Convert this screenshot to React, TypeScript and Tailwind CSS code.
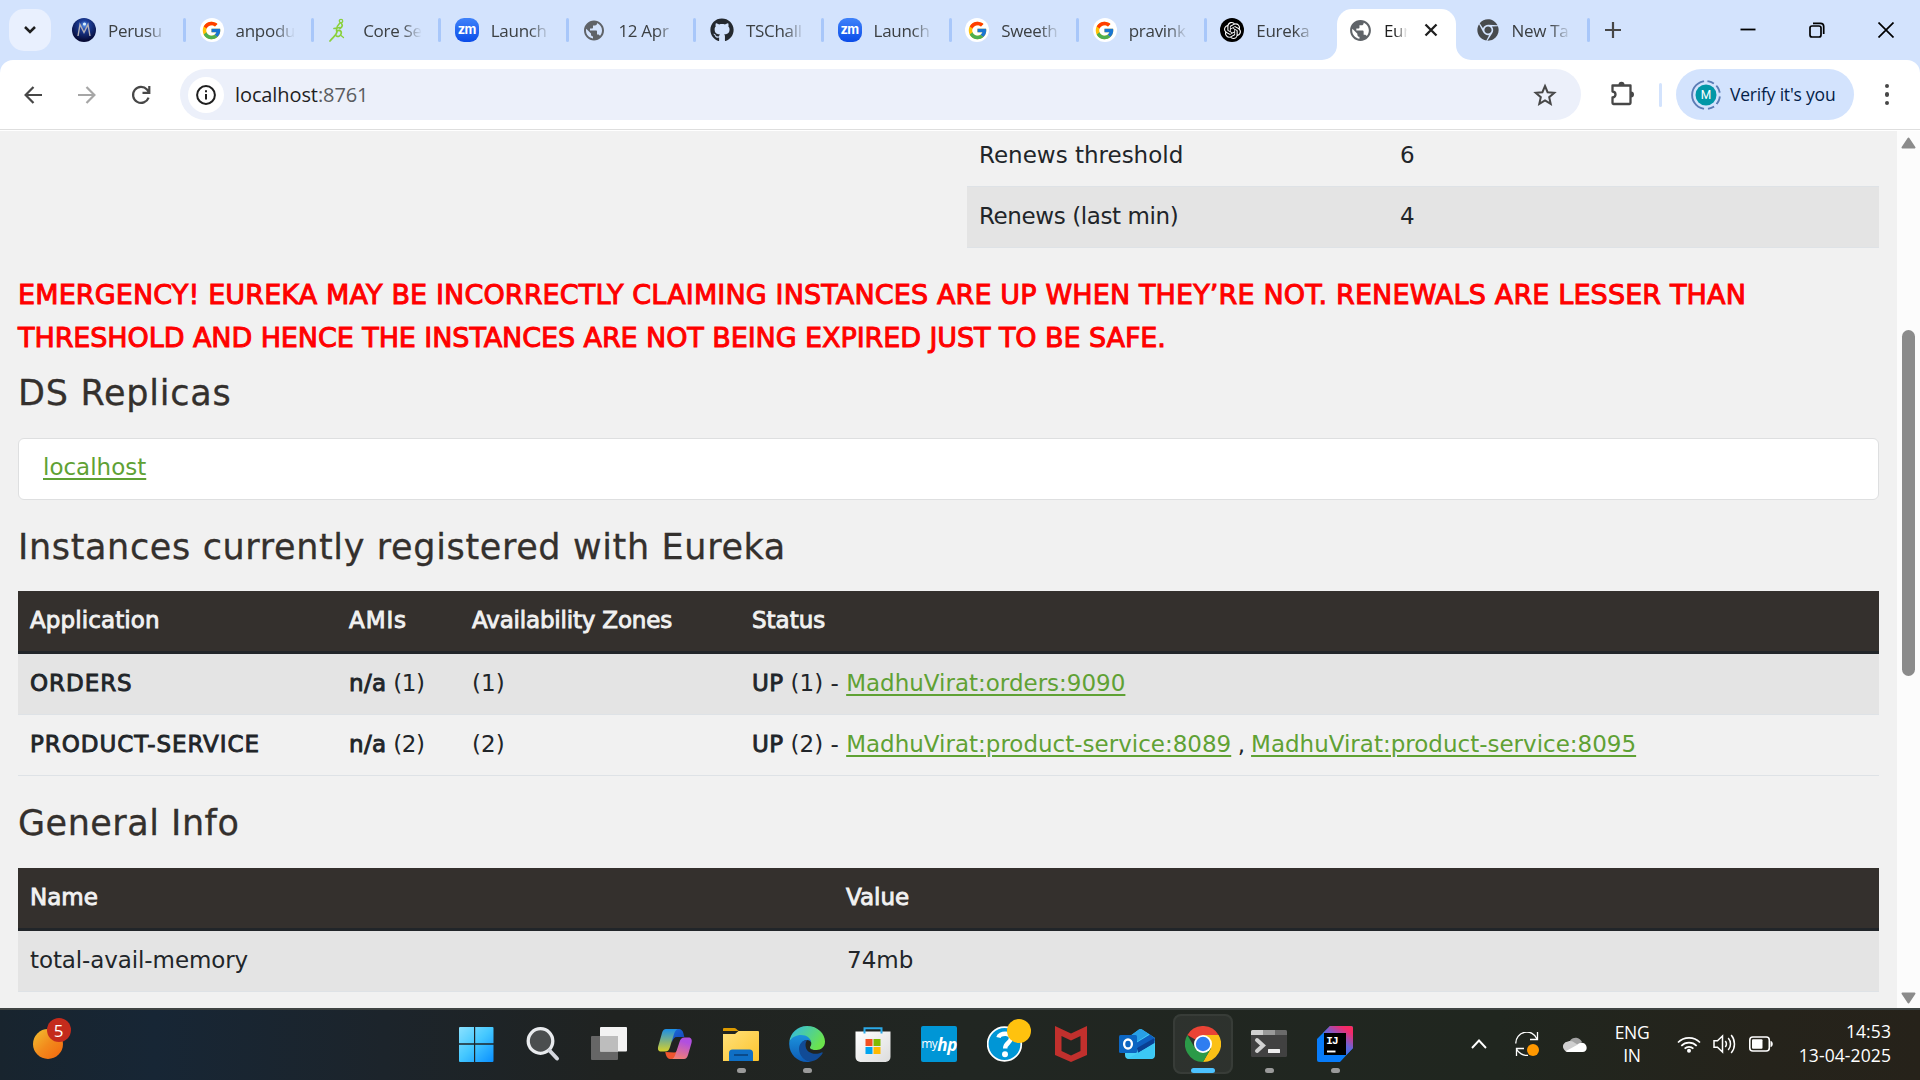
import React from "react";
import { MdPublic } from "react-icons/md";
import { FcGoogle } from "react-icons/fc";
import { FaGithub, FaChrome } from "react-icons/fa";
import { SiOpenai } from "react-icons/si";

/* ---------- favicons ---------- */

const MIcon = () => (
  <svg viewBox="0 0 24 24" className="size-6">
    <defs>
      <radialGradient id="mOrb" cx=".52" cy=".3" r=".65">
        <stop offset="0" stopColor="#5f9cf5" />
        <stop offset=".3" stopColor="#1c3f9c" />
        <stop offset="1" stopColor="#060a35" />
      </radialGradient>
    </defs>
    <circle cx="12" cy="12" r="12" fill="url(#mOrb)" />
    <path d="M6 18 8 6.5l4 8 4-8L18 18" fill="none" stroke="#b5b1b4" strokeWidth="1.4" />
    <circle cx="12.5" cy="6" r="1.6" fill="#d9f0ff" />
  </svg>
);

const GIcon = () => (
  <span className="flex size-6 items-center justify-center rounded-full bg-white">
    <FcGoogle className="size-[21px]" />
  </span>
);

const FigureIcon = () => (
  <svg viewBox="0 0 24 24" className="size-6" fill="none" stroke="#8ad03c" strokeLinecap="round">
    <circle cx="14" cy="3" r="1.7" strokeWidth="1.3" />
    <path d="M12.5 5.5c-3 3-3.500 6-2.500 8.500M14 5c2 2 1.500 4-1 5.500M7 10.500l6-1M10 13c3-1.500 5 .5 4 3s-3 3-4.500 2M10 14c-1 4-4 5-7 9" strokeWidth="1.7" />
    <path d="M14 17.500l2.500 2" strokeWidth="1.300" />
  </svg>
);

const ZmIcon = () => (
  <span className="flex size-6 items-center justify-center rounded-[9px] bg-gradient-to-b from-[#3f82fa] to-[#0a4be8] font-['Inter'] text-[13px] leading-none font-bold tracking-[-0.5px] text-white">
    <span className="-mt-[2px]">zm</span>
  </span>
);

const GlobeIcon = () => <MdPublic className="size-[25px] text-[#5f6368]" />;
const GithubIcon = () => <FaGithub className="size-6 text-[#24292f]" />;
const GptIcon = () => (
  <span className="flex size-6 items-center justify-center rounded-full bg-black">
    <SiOpenai className="size-[17px] text-white" />
  </span>
);
const ChromeGray = () => (
  <span className="flex size-6 items-center justify-center">
    <FaChrome className="size-[22px] text-[#474a4d]" />
  </span>
);

const tabs: { icon: React.FC; label: string; divider: boolean }[] = [
  { icon: MIcon, label: "Perusu", divider: true },
  { icon: GIcon, label: "anpodu", divider: true },
  { icon: FigureIcon, label: "Core Se", divider: true },
  { icon: ZmIcon, label: "Launch", divider: true },
  { icon: GlobeIcon, label: "12 Apr", divider: true },
  { icon: GithubIcon, label: "TSChall", divider: true },
  { icon: ZmIcon, label: "Launch", divider: true },
  { icon: GIcon, label: "Sweeth", divider: true },
  { icon: GIcon, label: "pravink", divider: true },
  { icon: GptIcon, label: "Eureka", divider: false },
];

const Tab = ({ icon: Icon, label, divider }: { icon: React.FC; label: string; divider: boolean }) => (
  <div className="flex h-full w-[127.6px] shrink-0 items-center">
    <div className="ml-[15px] flex w-6 shrink-0 justify-center"><Icon /></div>
    <span className="mt-[2px] ml-3 w-[62px] shrink-0 whitespace-nowrap text-[17px] tracking-[-0.3px] text-[#3c4043] [mask-image:linear-gradient(to_right,black_62%,transparent_95%)]">
      {label}
    </span>
    {divider && <span className="ml-auto -mr-[1.500px] h-6 w-[3px] rounded-full bg-[#a8c7fa]" />}
  </div>
);

const ActiveTab = () => (
  <div className="h-full w-[127.6px] shrink-0 px-[4.5px] pt-[9px]">
    <div className="relative flex h-[51px] items-center rounded-t-[15px] bg-white">
      <svg viewBox="0 0 15 15" className="absolute bottom-0 -left-[15px] size-[15px]"><path d="M15 0v15H0A15 15 0 0 0 15 0z" fill="#fff" /></svg>
      <svg viewBox="0 0 15 15" className="absolute -right-[15px] bottom-0 size-[15px]"><path d="M0 0v15h15A15 15 0 0 1 0 0z" fill="#fff" /></svg>
      <div className="-mt-[9px] ml-[10.5px] w-6"><GlobeIcon /></div>
      <span className="-mt-[7px] ml-[12px] w-[24px] whitespace-nowrap text-[17px] tracking-[-0.3px] text-[#1f1f1f] [mask-image:linear-gradient(to_right,black_45%,transparent_98%)]">
        Eur
      </span>
      <svg viewBox="0 0 14 14" className="-mt-[9px] ml-[16px] size-[14px]"><path d="M1.500 1.500l11 11M12.500 1.500l-11 11" stroke="#1f1f1f" strokeWidth="2.300" /></svg>
    </div>
  </div>
);

const TabStrip = () => (
  <div className="flex h-[60px] items-center bg-[#d3e3fd]">
    <div className="ml-[9px] flex size-[42px] shrink-0 items-center justify-center rounded-[15px] bg-[#e9f0fe]">
      <svg viewBox="0 0 14 10" className="h-[10px] w-[14px]"><path d="M2 2l5 5 5-5" fill="none" stroke="#1f1f1f" strokeWidth="2.500" /></svg>
    </div>
    <div className="ml-[6px] flex h-full items-center">
      {tabs.map((t, i) => <Tab key={i} {...t} />)}
      <ActiveTab />
      <Tab icon={ChromeGray} label="New Ta" divider />
    </div>
    <svg viewBox="0 0 16 16" className="ml-[17px] size-4"><path d="M8 0v16M0 8h16" stroke="#474747" strokeWidth="2.200" /></svg>
    <div className="mr-[26.500px] ml-auto flex items-center gap-[53px] text-black">
      <svg viewBox="0 0 16 16" className="size-4"><path d="M.5 7.500h15" stroke="currentColor" strokeWidth="1.800" /></svg>
      <svg viewBox="0 0 16 16" className="size-4" fill="none" stroke="currentColor" strokeWidth="1.700">
        <rect x="1" y="4" width="11" height="11" rx="2" />
        <path d="M4 1.300h7.500a3.200 3.200 0 0 1 3.200 3.200V12" />
      </svg>
      <svg viewBox="0 0 16 16" className="size-4"><path d="M.5.500l15 15M15.500.500l-15 15" stroke="currentColor" strokeWidth="1.700" /></svg>
    </div>
  </div>
);

const Toolbar = () => (
  <div className="bg-[#d3e3fd]">
    <div className="flex h-[69px] items-center rounded-t-[13px] bg-white">
      <svg viewBox="0 0 18 18" className="ml-6 size-[18px]" fill="none" stroke="#474747" strokeWidth="2.200"><path d="M18 9H1.800M9.500 1 1.600 9l7.900 8" /></svg>
      <svg viewBox="0 0 18 18" className="ml-9 size-[18px]" fill="none" stroke="#a6a6a6" strokeWidth="2.200"><path d="M0 9h16.200M8.500 1l7.900 8-7.900 8" /></svg>
      <svg viewBox="0 0 20 20" className="ml-[35px] size-5" fill="none" stroke="#474747" strokeWidth="2.200"><path d="M17.600 12.600A8 8 0 1 1 16 4.500L18 7M18.300 1v6.800h-6.800" /></svg>
      <div className="ml-[29px] flex h-[51px] w-[1401px] items-center rounded-full bg-[#ecf0fa]">
        <span className="ml-[8px] flex size-9 items-center justify-center rounded-full bg-white">
          <svg viewBox="0 0 20 20" className="size-5" fill="none" stroke="#1f1f1f" strokeWidth="2"><circle cx="10" cy="10" r="8.900" /><path d="M10 9v5.500M10 5.200v2" /></svg>
        </span>
        <span className="ml-[11px] text-[20px] tracking-[-0.100px] text-[#1f1f1f]">localhost<span className="text-[#5a5c60]">:8761</span></span>
        <svg viewBox="0 0 24 24" className="mr-6 ml-auto size-6" fill="none" stroke="#474747" strokeWidth="2"><path d="M12 3l2.600 6.200 6.700.6-5.100 4.400 1.500 6.600L12 17.300l-5.700 3.500 1.500-6.600L2.700 9.800l6.700-.6z" /></svg>
      </div>
      <svg viewBox="0 0 26 26" className="-mt-[3px] ml-[28px] size-[26px]">
        <path d="M3.500 5.500h18V23a1 1 0 0 1-1 1h-16a1 1 0 0 1-1-1v-5.500c4-.5 4-5.500 0-6z" fill="none" stroke="#474747" strokeWidth="2.300" strokeLinejoin="round" />
        <path d="M9.500 5a3 3.300 0 0 1 6 0zM22 11.500a3 3 0 0 1 0 6z" fill="#474747" />
      </svg>
      <span className="ml-[24px] h-6 w-[3px] rounded-full bg-[#d3e3fd]" />
      <div className="ml-[14px] flex h-[51px] w-[178px] items-center rounded-full bg-[#d3e3fd]">
        <svg viewBox="0 0 30 30" className="ml-[15px] size-[30px]">
          <circle cx="15" cy="15" r="13.900" fill="none" stroke="#5b7cb5" strokeWidth="1.900" />
          <path d="M15 15 13.500 0h2.500zM15 15 24.500 2l2 2zM15 15l15-2v3zM15 15l11 10-2 2zM15 15l1.500 15h-3z" fill="#d3e3fd" stroke="#d3e3fd" />
          <circle cx="15" cy="15" r="10.500" fill="#0097a7" />
          <text x="15" y="19.300" textAnchor="middle" fontSize="12" fontFamily="Roboto" fill="#fff">M</text>
        </svg>
        <span className="ml-[9px] text-[17.500px] tracking-[-0.200px] text-[#041e49]">Verify it's you</span>
      </div>
      <div className="ml-[30.500px] flex flex-col gap-1">
        <i className="size-[4.500px] rounded-full bg-[#474747]" /><i className="size-[4.500px] rounded-full bg-[#474747]" /><i className="size-[4.500px] rounded-full bg-[#474747]" />
      </div>
    </div>
    <div className="h-px bg-[#dedede]" />
    <div className="h-px bg-white" />
  </div>
);

/* ---------- page ---------- */

const cell = "h-[60px] pt-[10.500px] pl-3";
const Head = ({ children }: { children: React.ReactNode }) => (
  <div className="flex h-[63px] border-b-[3px] border-[#212529] bg-[#34302d] text-[#f1f1f1] [-webkit-text-stroke:0.9px]">{children}</div>
);
const H1 = ({ children, className }: { children: React.ReactNode; className: string }) => (
  <h1 className={"h-[44px] text-[35px] leading-[44px] font-normal text-[#34302d] [-webkit-text-stroke:0.3px] " + className}>{children}</h1>
);
const A = ({ children }: { children: React.ReactNode }) => (
  <a className="text-[#5fa134] underline decoration-2 underline-offset-[3px]">{children}</a>
);
const B = ({ children }: { children: React.ReactNode }) => (
  <b className="font-normal tracking-[0.300px] [-webkit-text-stroke:0.9px]">{children}</b>
);

const instances = [
  { name: "ORDERS", n: 1, links: ["MadhuVirat:orders:9090"] },
  { name: "PRODUCT-SERVICE", n: 2, links: ["MadhuVirat:product-service:8089", "MadhuVirat:product-service:8095"] },
];

const Page = () => (
  <div className="flex h-[877px] overflow-hidden bg-[#f1f1f1] font-['DejaVu_Sans',sans-serif] text-[23px] leading-[36px] text-[#212529]">
    <div className="ml-[18px] w-[1861px] shrink-0">
      <div className="-mt-[5px] ml-[949px]">
        <div className="flex h-[61px] border-b border-[#dee2e6]"><div className={cell + " w-[421px]"}>Renews threshold</div><div className={cell}>6</div></div>
        <div className="flex h-[61px] border-b border-[#dee2e6] bg-[#e4e4e4]"><div className={cell + " w-[421px] tracking-[-0.400px]"}>Renews (last min)</div><div className={cell}>4</div></div>
      </div>
      <h4 className="mt-[23px] h-[86px] pt-[1.500px] text-[27px] leading-[43px] font-normal tracking-[0.140px] whitespace-nowrap text-[#ff0000] [-webkit-text-stroke:1px]">
        EMERGENCY! EUREKA MAY BE INCORRECTLY CLAIMING INSTANCES ARE UP WHEN THEY’RE NOT. RENEWALS ARE LESSER THAN<br />
        <span className="tracking-[-0.080px]">THRESHOLD AND HENCE THE INSTANCES ARE NOT BEING EXPIRED JUST TO BE SAFE.</span>
      </h4>
      <H1 className="mt-3 pt-[2px] tracking-[0.750px]">DS Replicas</H1>
      <div className="mt-[25px] h-[62px] rounded-[6px] border border-[#dedfe0] bg-white pt-[10px] pl-6"><A>localhost</A></div>
      <H1 className="mt-[22px] pt-[3px] tracking-[0.640px]">Instances currently registered with Eureka</H1>
      <div className="mt-[25px]">
        <Head>
          <div className={cell + " w-[319px] tracking-[0.100px]"}>Application</div>
          <div className={cell + " w-[123px] tracking-[0.900px]"}>AMIs</div>
          <div className={cell + " w-[280px] tracking-[-0.180px]"}>Availability Zones</div>
          <div className={cell}>Status</div>
        </Head>
        {instances.map((r, i) => (
          <div key={r.name} className={"flex h-[61px] border-b border-[#dee2e6] whitespace-nowrap " + (i % 2 ? "" : "bg-[#e4e4e4]")}>
            <div className={cell + " w-[319px] tracking-[0.950px] [-webkit-text-stroke:0.9px]"}>{r.name}</div>
            <div className={cell + " w-[123px] tracking-[-0.400px]"}><B>n/a</B> ({r.n})</div>
            <div className={cell + " w-[280px]"}>({r.n})</div>
            <div className={cell}>
              <B>UP</B> ({r.n}) - {r.links.map((l, j) => <React.Fragment key={l}>{j > 0 && <span className="tracking-[-0.700px]"> , </span>}<A>{l}</A></React.Fragment>)}
            </div>
          </div>
        ))}
      </div>
      <H1 className="mt-[23px] pt-[2px] tracking-[0.500px]">General Info</H1>
      <div className="mt-[25px]">
        <Head><div className={cell + " w-[816px]"}>Name</div><div className={cell}>Value</div></Head>
        <div className="flex h-[61px] border-b border-[#dee2e6] bg-[#e4e4e4]"><div className={cell + " w-[817px] tracking-[-0.100px]"}>total-avail-memory</div><div className={cell}>74mb</div></div>
      </div>
    </div>
    <div className="ml-auto flex h-[877px] w-[23px] flex-col items-center bg-[#fcfcfc]">
      <svg viewBox="0 0 15 12" className="mt-[6px] h-3 w-[15px]"><path d="M7.500 1.500 13.500 10.500h-12z" fill="#8b8b8b" stroke="#8b8b8b" strokeWidth="2" strokeLinejoin="round" /></svg>
      <div className="mt-[181px] h-[346px] w-[13px] rounded-full bg-[#8b8b8b]" />
      <svg viewBox="0 0 15 12" className="mt-auto mb-[4px] h-3 w-[15px]"><path d="M7.500 10.500 13.500 1.500h-12z" fill="#8b8b8b" stroke="#8b8b8b" strokeWidth="2" strokeLinejoin="round" /></svg>
    </div>
  </div>
);

/* ---------- taskbar ---------- */

const S = ({ children }: { children: React.ReactNode }) => <svg viewBox="0 0 36 36" className="size-9">{children}</svg>;
const Lg = ({ id, a, b, x2 = 0, y2 = 1 }: { id: string; a: string; b: string; x2?: number; y2?: number }) => (
  <linearGradient id={id} x1="0" y1="0" x2={x2} y2={y2}><stop stopColor={a} /><stop offset="1" stopColor={b} /></linearGradient>
);

const apps: { icon: React.ReactNode; state?: string }[] = [
  { icon: <svg viewBox="1 0 36 36" className="size-9"><defs><linearGradient id="w" gradientUnits="userSpaceOnUse" x1="0" y1="0" x2="35" y2="36"><stop stopColor="#8fe3ff" /><stop offset=".5" stopColor="#45c8ff" /><stop offset="1" stopColor="#0a90ff" /></linearGradient></defs><path d="M1 2a1 1 0 0 1 1-1h14v16.300H1zM17.200 1H34.500a1 1 0 0 1 1 1v15.300H17.200zM1 18.700h15V36H2a1 1 0 0 1-1-1zM17.200 18.700H35.500V35a1 1 0 0 1-1 1H17.200z" fill="url(#w)" /></svg> },
  { icon: <S><circle cx="15.500" cy="15" r="12.300" fill="#4b4e4f" stroke="#e9ebee" strokeWidth="3.300" /><path d="M24.500 24.500l7.500 8" stroke="#d5d8e0" strokeWidth="4" strokeLinecap="round" /></S> },
  { icon: <S><rect x="0" y="10" width="27" height="24" rx="1" fill="#666" /><rect x="9" y="1" width="27" height="24.500" rx="1" fill="#f3f3f3" /><path d="M9 10h18v15.500H9z" fill="#bdbdbd" /></S> },
  { icon: <S>
      <defs><Lg id="c1" a="#1b8fe8" b="#d6d02a" x2={0} /><Lg id="c2" a="#b14fe0" b="#ff8a5c" x2={-0.3} /><Lg id="c3" a="#1a73e0" b="#1740b5" x2={1} /></defs>
      <path d="M22.500 3c2 .5 3.300 2 3.800 4l1 4H20c-3 0-4 2-5 5L10 3z" fill="url(#c3)" />
      <path d="M13 33c-3-.5-4-3-4.700-7l9 .5c2 0 3-2 4-5l4 11z" fill="#f0552e" />
      <path d="M9 3h13c-3 0-4 2-5 5l-4 13c-1 3-2 4.500-5 4.500H4C1 25.500.5 23 1.300 20L5 7c.8-2.700 2-4 4-4z" fill="url(#c1)" />
      <path d="M27 33H13.500c3 0 4-2 5-5l4-12c1-3 2-4.500 5-4.500h4c3 0 3.800 2.500 3 5.500l-3.500 12c-.8 2.700-2 4-4 4z" fill="url(#c2)" />
    </S> },
  { icon: <S><Lg id="f" a="#ffe07a" b="#fcc42e" x2={1} /><path d="M0 3a1 1 0 0 1 1-1h10.500c2 0 3 3 4.500 3H0z" fill="#dc9a00" /><path d="M0 8h12l3.500-3H35a1 1 0 0 1 1 1v28a1 1 0 0 1-1 1H0z" fill="url(#f)" /><path d="M6 35V27a3.500 3.500 0 0 1 3.500-3.500h17A3.500 3.500 0 0 1 30 27v8z" fill="#0f6fc5" /><path d="M11 29h14" stroke="#0a4a8a" strokeWidth="2" /></S>, state: "dot" },
  { icon: <S>
      <defs><Lg id="e1" a="#2fb8ee" b="#6be34c" x2={1} y2={0.500} /><Lg id="e2" a="#1c92dc" b="#0d5bb5" /></defs>
      <path d="M.3 16C1.200 7 8.500 0 18 0c11 0 18 8 18 15.500 0 5.500-4 8.500-8.500 8.500-4 0-6.500-1.300-6.500-2.600 0-1 1.300-1.500 1.300-4 0-4-4-6.500-8.500-6.500C7 10.900 2 13 .3 16z" fill="url(#e1)" />
      <path d="M.3 16C2.500 11 7.500 9 12 9c6 0 10 3.500 10.300 8-.3-2-2.300-3-4.300-3-4 0-7 4-7 9 0 6 4.500 11.500 11 12.500-1.300.400-2.700.5-4 .5C8 36-.8 27.500.3 16z" fill="url(#e2)" />
      <path d="M18 14c-4.500 0-8 4-8 9 0 6.500 6 12.800 12 12.500 5-.8 9-4 11.500-8 .5-1-.3-1.500-1-1-6 3-16 1-16-7.500 0-2 .8-3.800 1.500-5z" fill="#114b96" />
    </S>, state: "dot" },
  { icon: <S><Lg id="s" a="#ffffff" b="#dcdcdc" x2={1} /><path d="M.5 5.500h35V31a5 5 0 0 1-5 5h-25a5 5 0 0 1-5-5z" fill="url(#s)" /><path d="M9.500 7.500V2.200h17v5.300" fill="none" stroke="#2ba9e8" strokeWidth="2" /><path d="M10.500 13h7v7h-7z" fill="#f25022" /><path d="M18.500 13h7v7h-7z" fill="#7fba00" /><path d="M10.500 21h7v7h-7z" fill="#00a4ef" /><path d="M18.500 21h7v7h-7z" fill="#ffb900" /></S> },
  { icon: <span className="flex size-9 items-center justify-center rounded-[2px] bg-[#0096d6] font-['Open_Sans'] text-[12px] leading-none tracking-[-0.500px] text-white">my<b className="text-[17px] font-bold italic">hp</b></span> },
  { icon: <span className="relative"><S><circle cx="17.500" cy="18" r="16.800" fill="#0096d6" stroke="#fff" strokeWidth="1.700" /><path d="M11.500 11.500c1-4.500 12.500-5.500 12.500.5 0 5-5.800 4.500-5.800 10.500" fill="none" stroke="#fff" strokeWidth="4.500" /><circle cx="18" cy="28.300" r="3" fill="#fff" /></S><i className="absolute -top-[7px] -right-[8px] size-6 rounded-full bg-[#ffc20e]" /></span> },
  { icon: <S><path d="M2 0l16 7.500L34 0v29L18 36 2 29zM8.500 10v15l9.500 4.500 9.500-4.500V10L18 14.500z" fill="#c1302d" fillRule="evenodd" /></S> },
  { icon: <S><path d="M6 14 20 3.500q1.500-1 3 0L36 12v17a4 4 0 0 1-4 4H10a4 4 0 0 1-4-4z" fill="#45d0f8" /><path d="M8 12 20 3.500q1.500-1 3 0l7 4.500-14 9z" fill="#28a0e6" /><path d="M17 17 31 8.500l4 3q1.500 2 0 4L19 25z" fill="#0e5fc0" /><path d="M18 22 35.500 12v5L19 27z" fill="#0a3f93" /><path d="M8 33 35 18v11a4 4 0 0 1-4 4z" fill="#3cc8f5" /><rect y="9" width="18" height="18" rx="1.500" fill="#0c66c2" /><ellipse cx="9" cy="18" rx="3.900" ry="4.500" fill="none" stroke="#fff" strokeWidth="2.300" /></S> },
  { icon: <S><path d="M18 18 2.400 9A18 18 0 0 1 33.600 9z" fill="#ea4335" /><path d="M18 9h15.600A18 18 0 0 1 18 36l7.800-13.500z" fill="#fbc116" /><path d="M2.400 9A18 18 0 0 0 18 36l7.800-13.500h-15.600z" fill="#2b9a48" /><circle cx="18" cy="18" r="9" fill="#fff" /><circle cx="18" cy="18" r="7.200" fill="#2f7df0" /></S>, state: "active" },
  { icon: <S><rect y="4" width="36" height="27" rx="1.500" fill="#414141" /><path d="M1.500 4H13v5H0V5.500A1.500 1.500 0 0 1 1.500 4z" fill="#cfcfcf" /><path d="M12 4h12v5H12z" fill="#9a9a9a" /><path d="M24 4h10.500A1.500 1.500 0 0 1 36 5.500V9H24z" fill="#6b6b6b" /><path d="M6 14l6 5.500L6 25" fill="none" stroke="#d2d2d2" strokeWidth="4" strokeLinecap="round" /><rect x="17" y="23" width="12" height="4" rx=".5" fill="#eee" /></S>, state: "dot" },
  { icon: <S><defs><linearGradient id="ij" x1="1" y1="0" x2="0.300" y2="1"><stop stopColor="#ff2a55" /><stop offset=".2" stopColor="#f02c70" /><stop offset=".55" stopColor="#6a63d8" /><stop offset="1" stopColor="#087cfa" /></linearGradient></defs><path d="M13 0h21a2 2 0 0 1 2 2v20L23 36H2a2 2 0 0 1-2-2V13z" fill="#087cfa" /><path d="M13 0h21a2 2 0 0 1 2 2v20l-7 7V7H6z" fill="url(#ij)" /><path d="M7 7h22v22H7z" fill="#000" /><text x="9.300" y="18" fontSize="11" fontWeight="700" fontFamily="Liberation Mono" letterSpacing="-1" fill="#fff">IJ</text><path d="M10 25.500h8.500" stroke="#fff" strokeWidth="1.900" /></S>, state: "dot" },
];

const Taskbar = () => (
  <div className="flex h-[72px] items-center border-t-2 border-[#3f4443] bg-[linear-gradient(to_right,#18242e_0%,#172635_8%,#1c242b_20%,#202321_32%,#212622_50%,#20261f_78%,#25231b_92%,#26221a_100%)] pb-[2px]">
    <div className="relative ml-[32.500px] size-[30px] rounded-full bg-gradient-to-br from-[#f0c030] via-[#f28a1c] to-[#f2640c]">
      <span className="absolute -top-[11px] left-[14px] flex size-6 items-center justify-center rounded-full bg-[#c42b1c] font-['Open_Sans'] text-[17px] leading-none text-white">5</span>
    </div>
    <div className="ml-[381.500px] flex">
      {apps.map((a, i) => (
        <div key={i} className="relative flex w-[66px] justify-center">
          {a.state === "active" && <span className="absolute -top-3 left-[3px] size-[60px] rounded-[8px] border-2 border-white/5 bg-white/6" />}
          <span className="relative flex">{a.icon}</span>
          {a.state === "active" && <i className="absolute top-[42px] h-[5px] w-6 rounded-full bg-[#4cc2ff]" />}
          {a.state === "dot" && <i className="absolute top-[42px] h-[5px] w-[9px] rounded-full bg-[#9a9a9a]" />}
        </div>
      ))}
    </div>
    <svg viewBox="0 0 16 10" className="ml-auto h-[10px] w-4"><path d="M1 9l7-7.500L15 9" fill="none" stroke="#fff" strokeWidth="1.900" /></svg>
    <svg viewBox="0 0 24 24" className="ml-7 size-6" fill="none" stroke="#fff" strokeWidth="1.300">
      <path d="M.8 11.500A11 11 0 0 1 22 7M22.500 0v7.500H15M1.500 24v-7.500H9M1.500 17c2 4 6.500 7 11.500 6.300" /><circle cx="18" cy="18" r="6" fill="#ff9800" stroke="none" />
    </svg>
    <svg viewBox="0 0 24 16" className="ml-6 h-4 w-6"><path d="M7 4.500a7 7 0 0 1 12 1.500l-7 6z" fill="#a3a3a3" /><path d="M1 13.500A5 5 0 0 1 5 5.500c3-1 5 0 7 1.500l5 3-10 5.500H4a4 4 0 0 1-3-2z" fill="#cfcfcf" /><path d="M2.500 15.200 14 9c2-2 5-3 7.500-1.500 3.300 2.500 3 8.500-2 8.500H4.500a5 5 0 0 1-2-.8z" fill="#fff" /></svg>
    <div className="ml-[22px] w-[46px] text-center text-[17.500px] leading-[23px] tracking-[-0.300px] text-white">ENG<br />IN</div>
    <svg viewBox="0 0 24 18" className="ml-[22px] h-[18px] w-6" fill="none" stroke="#fff" strokeWidth="1.700"><path d="M1 7.500a15.500 15.500 0 0 1 22 0M4.300 10.800a11 11 0 0 1 15.400 0M7.600 13.700a6.300 6.300 0 0 1 8.800 0" /><circle cx="12" cy="15.800" r="2" fill="#fff" stroke="none" /></svg>
    <svg viewBox="0 0 24 20" className="ml-3 h-5 w-6" fill="none" stroke="#fff" strokeWidth="1.500"><path d="M1 6.800h3.500L9.500 2v16L4.500 13.200H1zM12.300 7a5 5 0 0 1 0 6M15.200 4a9 9 0 0 1 0 12M18.200 1a14 14 0 0 1 0 18" /></svg>
    <svg viewBox="0 0 24 16" className="ml-3 h-4 w-6"><rect x=".8" y="1" width="19.500" height="14" rx="3" fill="none" stroke="#fff" strokeWidth="1.600" /><rect x="3" y="3.300" width="10.500" height="9.500" rx="1" fill="#fff" /><path d="M21.500 5c3 0 3 6 0 6z" fill="#fff" /></svg>
    <div className="-mt-[2px] mr-[29px] ml-[18px] w-[100px] text-right text-[17.500px] leading-[24px] tracking-[0.100px] text-white">14:53<br />13-04-2025</div>
  </div>
);

export default function App() {
  return (
    <div className="h-[1080px] w-[1920px] overflow-hidden font-['Open_Sans',sans-serif]">
      <TabStrip />
      <Toolbar />
      <Page />
      <Taskbar />
    </div>
  );
}
